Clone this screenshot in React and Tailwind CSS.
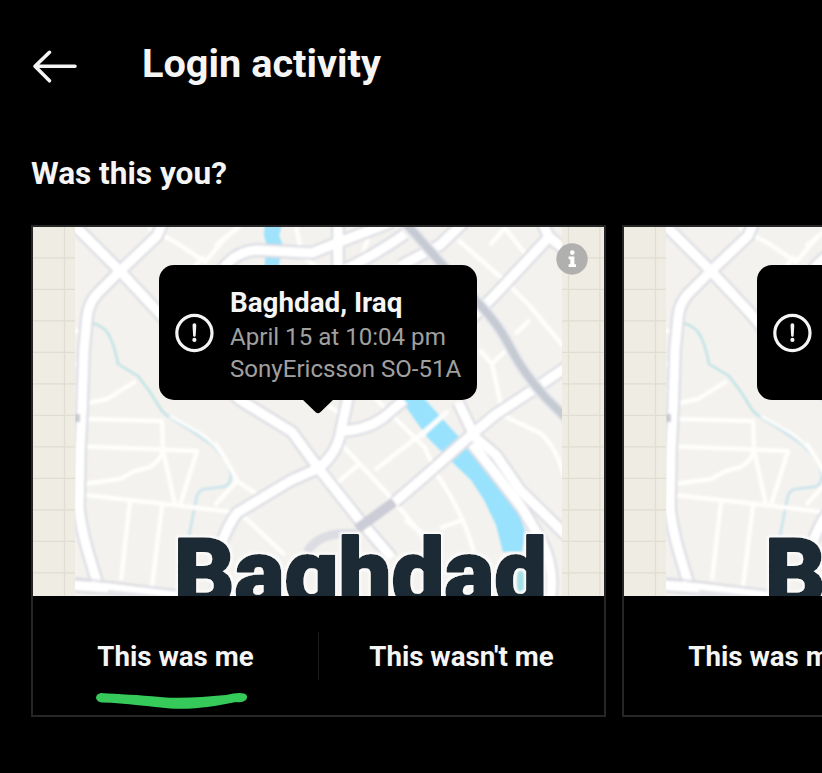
import React from 'react';

const highways = [
  'M70 221 L120 271 L160 314 L200 362 L240 400 L292 432 L319 469 L357 517 L392 558',
  'M163 222 L157 236 L120 271 L97 294 Q88 304 87 318 L84 350 L82 410 L80 450 L79 508 Q81 528 88 552 L97 582',
  'M70 585 L110 588 L190 598',
  'M319 468 L290 481 L237 513 Q228 524 219 550 L217 590',
  'M319 468 Q338 452 341 430 L348 398',
  'M343 431 Q366 430 383 418 L404 400',
  'M218 276 Q232 252 256 250 L312 253 Q332 245 350 238 L392 222',
  'M338 222 L338 270',
  'M400 266 L440 245 L464 222',
  'M344 270 Q380 252 405 234',
  'M541 220 L549 237 L495 295 L470 320',
  'M549 237 L568 252',
  'M568 366 L530 392 L495 415 L470 436 L432 470 L395 502',
  'M458 402 L475 437 L496 455 L520 490 L568 537',
  'M472 444 L495 473 L522 508 L540 538 Q556 568 550 600',
];

const streets = [
  'M86 419 L162 421 L163 450 L175 505',
  'M75 446 L197 451 L180 505',
  'M84 484 L120 479 L135 471 L150 467 Q161 460 163 450',
  'M84 495 L165 504 L240 513',
  'M130 501 L121 580',
  'M162 505 L152 586',
  'M88 403 L107 399 L136 381',
  'M74 331 H86 M74 364 H86 M74 391 H84',
  'M148 227 L180 245 L205 262 L228 235',
  'M204 256 L190 272',
  'M215 246 L240 226 M296 226 L302 256 L318 268 M372 226 L362 256',
  'M215 443 Q230 465 237 481 L262 498',
  'M237 481 L215 505 M240 513 L285 555',
  'M375 398 L425 448 L437 475 Q462 510 474 552',
  'M343 446 L395 502 L430 545',
  'M336 484 L358 465 M375 470 L425 431 L448 411',
  'M328 406 L342 414',
  'M458 240 L505 281 L530 306 L568 352',
  'M490 245 L505 228 L530 260 M515 334 L530 320',
  'M480 350 L492 364 L502 410 M492 364 L508 348',
  'M500 414 L540 433 Q556 446 564 476',
  'M405 520 L425 535 M440 528 L462 520',
];

function CityMap() {
  const rows = Array.from({ length: 11 }, (_, i) => 257.8 + i * 31.5);
  return (
    <svg className="block h-[369px] w-[571px]" viewBox="33 227 571 369" fill="none" strokeLinejoin="round">
      <defs>
        <clipPath id="tile"><rect x="75" y="227" width="487" height="369" /></clipPath>
        <filter id="soften" x="0" y="0" width="1" height="1"><feGaussianBlur stdDeviation="0.8" /></filter>
        <filter id="halo" filterUnits="userSpaceOnUse" x="160" y="510" width="410" height="130">
          <feMorphology in="SourceAlpha" operator="dilate" radius="2" result="grown" />
          <feGaussianBlur in="grown" stdDeviation="0.8" result="edge" />
          <feFlood floodColor="#fcfcfc" />
          <feComposite in2="edge" operator="in" result="glow" />
          <feMerge><feMergeNode in="glow" /><feMergeNode in="SourceGraphic" /></feMerge>
        </filter>
      </defs>
      <rect x="33" y="227" width="571" height="369" fill="#efece3" />
      <g stroke="#e0ddd2" strokeWidth="1.2">
        {rows.map((y) => <path key={y} d={`M33 ${y} H604`} />)}
        <path d="M64.5 227 V596 M568.5 227 V596 M599.8 227 V596" />
      </g>
      <g clipPath="url(#tile)">
        <rect x="75" y="227" width="487" height="369" fill="#f4f2ee" />
        <g filter="url(#soften)">
          <path d="M265 220 H283 L279 236 L283 245 L278 270 H264 L267 246 L264 236 Z" fill="#9ee2fb" />
          <path d="M398 396 L420 394 L440 416 L457 435 L474 448 L489 464 L505 490 L519 515 L526 533 L522 552 L503 552 L496 525 L484 500 L471 480 L450 460 L428 438 Z" fill="#98e2fd" />
          <path d="M517 570 h8 v30 h-8 Z" fill="#a5dfe6" />
          <path d="M92 323 Q104 326 109 335 Q115 347 118 364 L138 376 L150 392 L160 408 Q164 415 174 419" stroke="#c2e3e5" strokeWidth="2.6" />
          <path d="M166 415 L190 430 L212 445 Q228 460 231 475 Q231 486 222 487 L204 489 Q197 491 196 500 L189 536" stroke="#c9e4ec" strokeWidth="2.6" />
          <path d="M170 416 L200 433 Q222 448 232 472" stroke="#fdfdfc" strokeWidth="3" />
          {streets.map((d) => <path key={d} d={d} stroke="#fefefc" strokeWidth="4.4" />)}
          {highways.map((d) => <path key={d} d={d} stroke="#dcdde4" strokeWidth="14" />)}
          {highways.map((d) => <path key={d} d={d} stroke="#ffffff" strokeWidth="9.5" />)}
          <path d="M420 437 L448 411" stroke="#fdfdfd" strokeWidth="4.5" />
          <path d="M76 578 L140 586 M76 592 L96 593 M108 591 L170 598" stroke="#dddee2" strokeWidth="2" />
          <path d="M403 220 L440 262 L480 305 Q499 325 510 347 Q522 371 545 397 L568 420" stroke="#e7e9ef" strokeWidth="12" />
          <path d="M403 220 L440 262 L480 305 Q499 325 510 347 Q522 371 545 397 L568 420" stroke="#c6cbd3" strokeWidth="8" />
          <path d="M394 502 L357 529" stroke="#cbccd5" strokeWidth="10" />
          <path d="M357 534 Q320 530 307 552" stroke="#dcdde3" strokeWidth="9" />
          <path d="M75 414 h5 v8 h-5z" fill="#c9cad0" />
        </g>
        <text x="174" y="606" textLength="373" lengthAdjust="spacingAndGlyphs" fontFamily="Roboto, sans-serif" fontWeight="900" fontSize="95" fill="#1b2b34" stroke="#1b2b34" strokeWidth="2.2" filter="url(#halo)">Baghdad</text>
      </g>
    </svg>
  );
}

function AlertIcon() {
  return (
    <svg className="h-10 w-10 shrink-0" viewBox="0 0 40 40" fill="none">
      <circle cx="20.4" cy="20" r="17.6" stroke="#f5f5f5" strokeWidth="3.2" />
      <path d="M18.5 12.2 a1.9 1.9 0 0 1 3.8 0 L21.7 22.4 a1.3 1.3 0 0 1 -2.6 0 Z" fill="#f5f5f5" />
      <circle cx="20.4" cy="26.9" r="2.1" fill="#f5f5f5" />
    </svg>
  );
}

function InfoBadge() {
  return (
    <svg className="absolute left-[523px] top-[16px] h-8 w-8" viewBox="0 0 32 32">
      <circle cx="16" cy="16" r="15.7" fill="#b0b0ae" />
      <circle cx="16.3" cy="9.6" r="2.3" fill="#fff" />
      <path d="M12.6 13.4 H18.4 V21.2 H20 V24 H12.6 V21.2 H14.3 V16.2 H12.6 Z" fill="#fff" />
    </svg>
  );
}

function LoginCard({ bubbleClass, children, marked }) {
  return (
    <article className="h-[492px] w-[575px] shrink-0 border-2 border-[#262626] bg-black">
      <div className="relative h-[369px] overflow-hidden">
        <CityMap />
        <InfoBadge />
        <div className={`absolute top-[38.4px] flex h-[134.6px] items-center rounded-[15px] bg-black pl-[15px] ${bubbleClass}`}>
          <AlertIcon />
          {children}
          <svg className="absolute left-1/2 top-[134px] h-4 w-8 -translate-x-1/2" viewBox="0 0 32 16">
            <path d="M0 0 H32 L18 13.6 Q16 15 14 13.6 Z" fill="#000" />
          </svg>
        </div>
      </div>
      <div className="relative flex h-[119px] items-center text-[27.7px] font-bold text-[#f5f5f5]">
        <button className="w-[285px] whitespace-nowrap pt-[2px]">This was me</button>
        <span className="h-12 w-px bg-[#1c1c1c]" />
        <button className="w-[285px] whitespace-nowrap pt-[2px]">This wasn't me</button>
        {marked && (
          <svg className="absolute left-[61px] top-[94px] h-[20px] w-[156px]" viewBox="0 0 156 20" fill="none">
            <path d="M7 3 Q2 4 2 8 Q3 12 8 12.5 C32 13 58 17 76 18.5 C100 20 122 16 142 12 Q148 13 152 10 Q155 5 150 3.5 Q144 2 132 5 C108 7 88 9 66 7 C45 5 24 4 7 3 Z" fill="#35ca5a" />
          </svg>
        )}
      </div>
    </article>
  );
}

export default function App() {
  return (
    <main className="h-[773px] w-[822px] overflow-hidden bg-black font-['Roboto',sans-serif] text-[#f5f5f5]">
      <header className="flex h-[132px] items-center pl-8">
        <svg className="h-9 w-[46px]" viewBox="0 0 46 36" fill="none" stroke="#f5f5f5" strokeWidth="3.6" strokeLinecap="round" strokeLinejoin="round">
          <path d="M43 18.3 H3 M17.5 4.3 L3 18.3 L17.5 32.8" />
        </svg>
        <h1 className="ml-[64px] pb-1 text-[39.7px] font-bold leading-none">Login activity</h1>
      </header>
      <h2 className="flex h-[93px] items-center pb-[9px] pl-[31px] text-[31.6px] font-bold leading-none">Was this you?</h2>
      <section className="flex gap-4 pl-[31px]">
        <LoginCard bubbleClass="left-[126px] w-[318px]" marked>
          <div className="ml-4 whitespace-nowrap pt-[4px]">
            <p className="text-[27.8px] font-bold leading-[36px]">Baghdad, Iraq</p>
            <p className="text-[24.1px] leading-[32px] text-[#a0a0a0]">April 15 at 10:04 pm</p>
            <p className="text-[24.1px] leading-[32px] text-[#a0a0a0]">SonyEricsson SO-51A</p>
          </div>
        </LoginCard>
        <LoginCard bubbleClass="left-[133px] w-[304px]" />
      </section>
    </main>
  );
}
